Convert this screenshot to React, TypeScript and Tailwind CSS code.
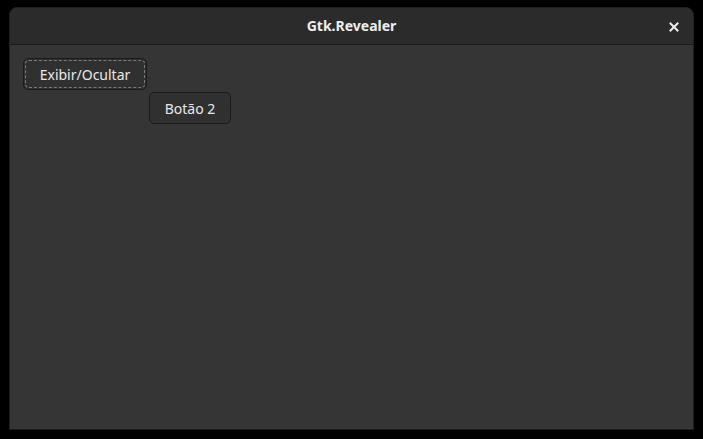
const App: React.FC = () => {
  return (
    <div className="w-[703px] h-[439px] bg-black pt-[7px] pl-[9px] overflow-hidden" style={{ fontFamily: '"Noto Sans", "Open Sans", sans-serif' }}>
      <div className="w-[685px] h-[423px] flex flex-col rounded-t-[8px] overflow-hidden bg-[#353535] border border-[#1e1e1e]">
        {/* header bar */}
        <div className="relative h-[37px] shrink-0 flex items-center justify-center bg-[#2b2b2b] border-b border-[#1a1a1a]">
          <span className="text-[14px] font-bold text-[#eeeeee] leading-none">Gtk.Revealer</span>
          <svg className="absolute right-[14px] top-[14px]" width="10" height="10" viewBox="0 0 10 10">
            <path d="M1.5 1.5 L8.5 8.5 M8.5 1.5 L1.5 8.5" stroke="#eeeeee" strokeWidth="2" strokeLinecap="square" />
          </svg>
        </div>

        <div className="grid grid-cols-[auto_auto] justify-start gap-[2px] pt-[13px] pl-[13px]">
          <button className="relative w-[124px] h-[32px] rounded-[5px] bg-[#303030] border border-[#1b1b1b] text-[14px] text-[#e8e8e8]">
            <span className="absolute inset-[1px] rounded-[4px] border border-dashed border-[#7a7a7a]" />
            Exibir/Ocultar
          </button>
          <div />
          <div />
          <button className="w-[82px] h-[32px] rounded-[5px] bg-[#303030] border border-[#1b1b1b] text-[14px] text-[#e8e8e8]">
            Botão 2
          </button>
        </div>
      </div>
    </div>
  );
};

export default App;
